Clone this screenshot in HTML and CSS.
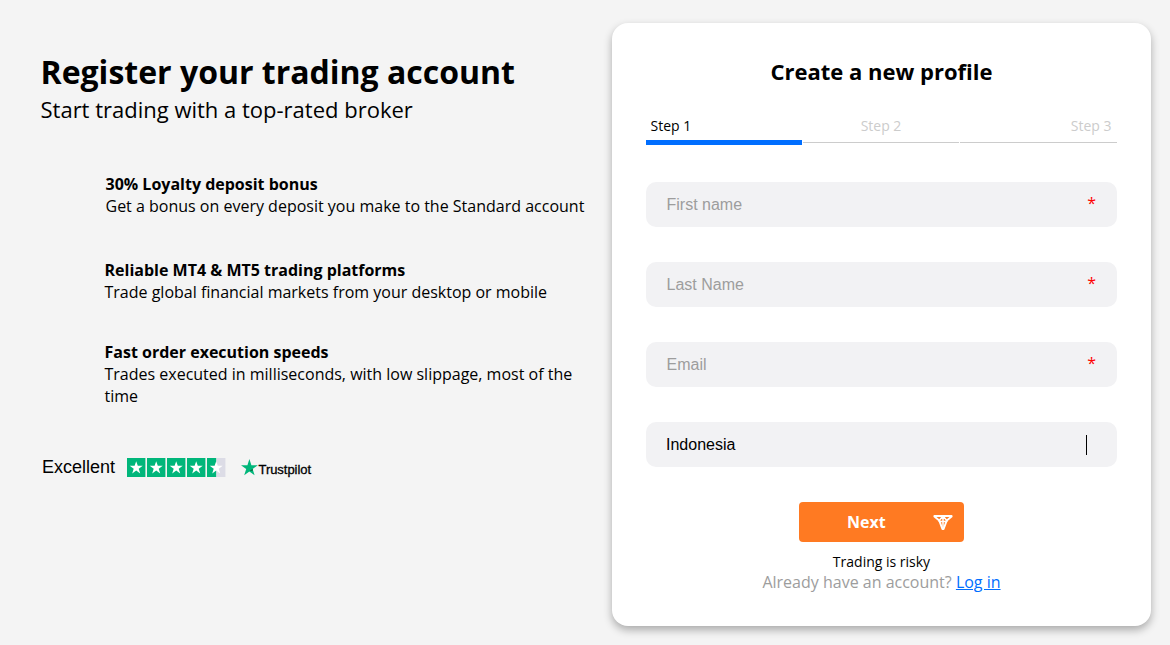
FILE: index.html
```html
<!DOCTYPE html>
<html lang="en">
<head>
    <meta charset="UTF-8">
    <meta name="viewport" content="width=device-width, initial-scale=1.0">
    <title>Register your trading account</title>
    <link rel="stylesheet" href="styles.css">
</head>
<body>

    <div class="page">
        <!-- Intro -->
        <div class="intro">
            <h1>Register your trading account</h1>
            <p class="subtitle">Start trading with a top-rated broker</p>

            <div class="feature feature-bonus">
                <h3>30% Loyalty deposit bonus</h3>
                <p>Get a bonus on every deposit you make to the Standard account</p>
            </div>
            <div class="feature feature-platforms">
                <h3>Reliable MT4 &amp; MT5 trading platforms</h3>
                <p>Trade global financial markets from your desktop or mobile</p>
            </div>
            <div class="feature feature-speed">
                <h3>Fast order execution speeds</h3>
                <p>Trades executed in milliseconds, with low slippage, most of the time</p>
            </div>

            <!-- Trustpilot rating -->
            <div class="rating">
                <span class="rating-word">Excellent</span>
                <svg class="stars" width="99" height="19" viewBox="0 0 99 19">
                    <defs>
                        <path id="star" d="M9.2 3.2l1.6 4.6h4.9l-4 2.9 1.5 4.8-4-2.9-4 2.9 1.5-4.8-4-2.9h4.9z"/>
                    </defs>
                    <path fill="#00b67a" d="M0 0h18.4v19H0zM20 0h18.4v19H20zM40 0h18.4v19H40zM60 0h18.4v19H60zM80 0h9.4v19H80z"/>
                    <path fill="#dcdce6" d="M89.4 0H98.4v19h-9z"/>
                    <g fill="#fff">
                        <use href="#star"/>
                        <use href="#star" x="20"/>
                        <use href="#star" x="40"/>
                        <use href="#star" x="60"/>
                        <use href="#star" x="80"/>
                    </g>
                </svg>
                <svg class="tp-star" width="17" height="17" viewBox="0 0 17 17">
                    <path fill="#00b67a" d="M8.4 0l2 6.2h6.4l-5.2 3.9 2 6.2-5.2-3.8-5.2 3.8 2-6.2L0 6.2h6.4z"/>
                    <path fill="#005128" d="M12 11.3l-.5-1.4-3.1 2.3z"/>
                </svg>
                <span class="tp-name">Trustpilot</span>
            </div>
        </div>

        <!-- Registration form -->
        <form class="card">
            <h2>Create a new profile</h2>

            <div class="steps">
                <span class="step active">Step 1</span>
                <span class="step">Step 2</span>
                <span class="step">Step 3</span>
            </div>
            <div class="progress">
                <div class="bar active"></div>
                <div class="bar"></div>
                <div class="bar"></div>
            </div>

            <label class="field">
                <input type="text" placeholder="First name">
                <span class="required">*</span>
            </label>
            <label class="field">
                <input type="text" placeholder="Last Name">
                <span class="required">*</span>
            </label>
            <label class="field">
                <input type="email" placeholder="Email">
                <span class="required">*</span>
            </label>
            <label class="field country">
                <input type="text" value="Indonesia">
                <span class="divider"></span>
            </label>

            <button type="button" class="next">
                <span>Next</span>
                <svg width="20" height="17" viewBox="0 0 20 17" fill="none" stroke="#fff" stroke-width="1.9" stroke-linejoin="round" stroke-linecap="round">
                    <path d="M1.4 2h17.2v.6L13.8 6.4 10.6 15H9.4L6.2 6.4 1.4 2.6z"/>
                    <path d="M6.2 6.4L10 2l3.8 4.4M10 2v13M6.2 7.4h7.6" stroke-width="1.5"/>
                </svg>
            </button>

            <p class="risk">Trading is risky</p>
            <p class="login">Already have an account? <a href="#">Log in</a></p>
        </form>
    </div>

</body>
</html>
```
FILE: styles.css
```css
* {
    box-sizing: border-box;
}
body {
    font-family: 'Open Sans', sans-serif;
    margin: 0;
    background-color: #f4f4f4;
    color: #000;
}
h1, h2, h3, p {
    margin: 0;
}
.page {
    display: flex;
    align-items: flex-start;
    min-height: 645px;
    padding: 23px 19px 0 40.5px;
}

/* Intro */
.intro {
    width: 571.5px;
    padding-top: 27px;
}
.intro h1 {
    font-size: 32px;
    line-height: 44px;
    font-weight: 700;
}
.subtitle {
    font-size: 22px;
    line-height: 30px;
}
.feature {
    padding-left: 64px;
    padding-right: 20px;
    font-size: 16px;
    line-height: 22px;
}
.feature h3 {
    font-size: 16px;
    font-weight: 700;
}
.feature-bonus {
    margin-top: 49px;
    padding-left: 65px;
}
.feature-platforms {
    margin-top: 42px;
}
.feature-speed {
    margin-top: 38px;
}
.rating {
    display: flex;
    align-items: center;
    height: 21px;
    margin-top: 50px;
    padding-left: 1.5px;
    font-family: 'Liberation Sans', Arial, sans-serif;
}
.rating-word {
    width: 85px;
    font-size: 18px;
}
.tp-star {
    margin-left: 14.5px;
    margin-bottom: 1px;
}
.tp-name {
    margin-left: 1px;
    padding-top: 3px;
    font-size: 13px;
    letter-spacing: -0.05px;
    -webkit-text-stroke: 0.3px #000;
}

/* Form card */
.card {
    width: 539px;
    height: 603px;
    padding: 33px 34px 0;
    background-color: #fff;
    border-radius: 16px;
    box-shadow: 0 4px 8px rgba(0, 0, 0, 0.3);
}
.card h2 {
    font-size: 22px;
    line-height: 30px;
    font-weight: 700;
    text-align: center;
}
.steps {
    display: flex;
    justify-content: space-between;
    margin-top: 30px;
    padding: 0 5.5px 0 4.5px;
    font-size: 14px;
    line-height: 20px;
}
.step {
    color: #ccc;
}
.step.active {
    color: #000;
}
.progress {
    display: grid;
    grid-template-columns: 156px 156px 157px;
    align-items: center;
    gap: 1px;
    height: 5px;
    margin: 4px 0 37px;
}
.bar {
    height: 1px;
    background-color: #ccc;
}
.bar.active {
    height: 5px;
    background-color: #006eff;
}
.field {
    display: flex;
    align-items: center;
    height: 45px;
    margin-bottom: 35px;
    padding: 0 21px 0 20.5px;
    background-color: #f2f2f4;
    border-radius: 10px;
}
.field input {
    flex: 1;
    padding: 0;
    border: none;
    outline: none;
    background: none;
    font-family: 'Liberation Sans', Arial, sans-serif;
    font-size: 16px;
    color: #000;
}
.field input::placeholder {
    color: #9d9d9d;
}
.required {
    padding-bottom: 3px;
    color: #f00;
    font-size: 16px;
}
.country {
    padding: 0 30px 0 20px;
}
.divider {
    width: 1px;
    height: 20px;
    background-color: #000;
}
.next {
    display: flex;
    align-items: center;
    justify-content: space-between;
    width: 165px;
    height: 40px;
    margin: 0 auto;
    padding: 0 11px 0 48px;
    border: none;
    border-radius: 4px;
    background-color: #ff7a22;
    color: #fff;
    font-family: inherit;
    font-size: 16px;
    font-weight: 700;
    cursor: pointer;
}
.risk {
    margin-top: 10px;
    font-size: 14px;
    line-height: 19px;
    text-align: center;
}
.login {
    font-size: 16px;
    line-height: 22px;
    color: #9d9d9d;
    text-align: center;
}
.login a {
    color: #006eff;
}
```
